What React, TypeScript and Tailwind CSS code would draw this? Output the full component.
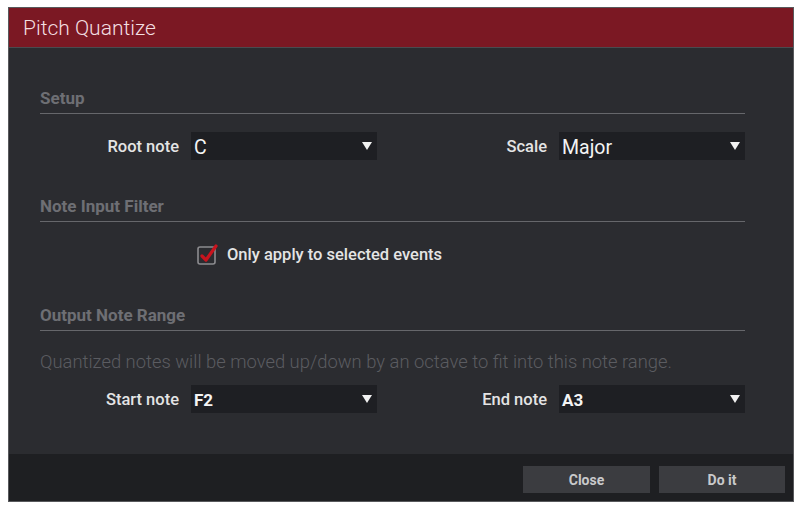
const font = { fontFamily: 'Roboto, "Liberation Sans", sans-serif' };

const Caret = () => (
  <svg width="10" height="8" viewBox="0 0 10 8" className="shrink-0">
    <path d="M0 0 H10 L5 8 Z" fill="#f2f2f2" />
  </svg>
);

const Select = ({ value, bold }: { value: string; bold?: boolean }) => (
  <div className="flex h-[28px] w-[186px] items-center justify-between bg-[#1e1f23] pl-[3px] pr-[5px]">
    <span
      className={
        bold
          ? 'pt-[3px] text-[17px] font-bold text-[#f4f4f4]'
          : 'pt-[3px] text-[19.5px] font-normal text-[#f4f4f4]'
      }
    >
      {value}
    </span>
    <Caret />
  </div>
);

const Field = ({ label, value, bold }: { label: string; value: string; bold?: boolean }) => (
  <div className="flex h-[28px] items-center justify-end gap-[12px]">
    <span className="pt-[2px] text-[16.5px] font-medium text-[#e4e4e4]">{label}</span>
    <Select value={value} bold={bold} />
  </div>
);

const SectionHeader = ({ title }: { title: string }) => (
  <div className="border-b border-[#66676b] pb-[6px]">
    <div className="h-[20px] pt-[1px] text-[17px] font-bold leading-[20px] text-[#6e6f74]">{title}</div>
  </div>
);

const Checkbox = () => (
  <svg width="22" height="22" viewBox="0 0 22 22" className="shrink-0">
    <rect x="1" y="3" width="17" height="17" rx="2" fill="none" stroke="#8c8c8f" strokeWidth="1.6" />
    <path d="M5 12 L9 16 L19 2" fill="none" stroke="#c8141e" strokeWidth="3.2" strokeLinecap="round" strokeLinejoin="round" />
  </svg>
);

const App = () => {
  return (
    <div className="h-[509px] w-[795px] bg-white pl-[8px] pt-[7px]" style={font}>
      <div className="flex h-[495px] w-[786px] flex-col border border-[#58595c] bg-[#2b2c30]">
        <div className="flex h-[40px] items-center border-b border-[#4a4b4f] bg-[#7b1823] pl-[14px]">
          <span className="pt-[2px] text-[21px] font-light text-[#f3dfe1]">Pitch Quantize</span>
        </div>

        <div className="flex-1 pl-[31px] pt-[39px]">
          <div className="w-[705px]">
            <SectionHeader title="Setup" />
            <div className="mt-[18px] grid grid-cols-[337px_368px]">
              <Field label="Root note" value="C" />
              <Field label="Scale" value="Major" />
            </div>

            <div className="mt-[35px]">
              <SectionHeader title="Note Input Filter" />
            </div>
            <div className="mt-[22px] flex h-[22px] items-center gap-[8px] pl-[157px]">
              <Checkbox />
              <span className="pt-[1px] text-[16.5px] font-medium text-[#e4e4e4]">Only apply to selected events</span>
            </div>

            <div className="mt-[38px]">
              <SectionHeader title="Output Note Range" />
            </div>
            <div className="mt-[20px] h-[22px] whitespace-nowrap text-[18.4px] font-light leading-[22px] text-[#5b5c61]">
              Quantized notes will be moved up/down by an octave to fit into this note range.
            </div>
            <div className="mt-[12px] grid grid-cols-[337px_368px]">
              <Field label="Start note" value="F2" bold />
              <Field label="End note" value="A3" bold />
            </div>
          </div>
        </div>

        <div className="flex h-[47px] items-start justify-end gap-[9px] bg-[#1e1f22] pr-[8px] pt-[12px]">
          <button className="h-[27px] w-[127px] bg-[#3b3c40] pt-[2px] text-[14px] font-bold text-[#c9c9cb]">Close</button>
          <button className="h-[27px] w-[126px] bg-[#3b3c40] pt-[2px] text-[14px] font-bold text-[#c9c9cb]">Do it</button>
        </div>
      </div>
    </div>
  );
};

export default App;
